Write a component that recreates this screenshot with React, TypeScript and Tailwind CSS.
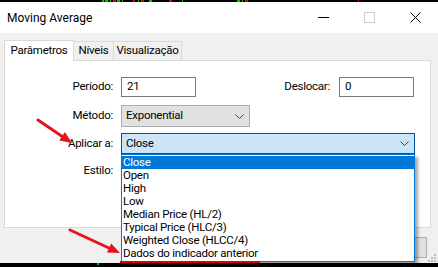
import React from "react";

const Chevron = ({ className = "" }: { className?: string }) => (
  <svg width="9" height="5" viewBox="0 0 9 5" className={className}>
    <path d="M0.5 0.5 L4.5 4.5 L8.5 0.5" fill="none" stroke="#444" strokeWidth="1" />
  </svg>
);

const marks = [
  { x: 102, w: 2, c: "#00c000" },
  { x: 105, w: 3, c: "#00c000" },
  { x: 110, w: 1, c: "#00c000" },
  { x: 113, w: 3, c: "#e00000" },
  { x: 117, w: 3, c: "#00c000" },
  { x: 122, w: 1, c: "#00c000" },
  { x: 133, w: 2, c: "#e00000" },
  { x: 138, w: 1, c: "#00c000" },
  { x: 141, w: 3, c: "#e00000" },
  { x: 149, w: 3, c: "#00c000" },
  { x: 169, w: 3, c: "#e00000" },
  { x: 182, w: 1, c: "#00c000" },
  { x: 237, w: 3, c: "#00c000" },
  { x: 242, w: 1, c: "#00c000" },
  { x: 245, w: 3, c: "#e00000" },
  { x: 358, w: 1, c: "#e00000" },
];

const items = [
  "Close",
  "Open",
  "High",
  "Low",
  "Median Price (HL/2)",
  "Typical Price (HLC/3)",
  "Weighted Close (HLCC/4)",
  "Dados do indicador anterior",
];

export default function App() {
  return (
    <div className="relative w-[438px] h-[267px] overflow-hidden bg-[#f0f0f0] flex flex-col font-['Roboto',sans-serif] text-[11.5px] tracking-[-0.25px] text-black leading-none">
      {/* top black strip */}
      <div className="relative h-[2px] bg-black shrink-0">
        {marks.map((m, i) => (
          <span
            key={i}
            className="absolute top-0 h-[2px]"
            style={{ left: m.x, width: m.w, background: m.c }}
          />
        ))}
      </div>

      {/* title bar */}
      <div className="h-[31px] bg-white flex items-center shrink-0">
        <span className="pl-[7px] text-[12px] tracking-normal">Moving Average</span>
        <div className="ml-auto flex items-center h-full">
          <div className="w-[46px] flex justify-center">
            <svg width="11" height="11" viewBox="0 0 11 11">
              <line x1="0" y1="5.5" x2="11" y2="5.5" stroke="#000" strokeWidth="1" />
            </svg>
          </div>
          <div className="w-[46px] flex justify-center">
            <svg width="11" height="11" viewBox="0 0 11 11">
              <rect x="0.5" y="0.5" width="10" height="10" fill="none" stroke="#cccccc" strokeWidth="1" />
            </svg>
          </div>
          <div className="w-[46px] flex justify-center">
            <svg width="11" height="11" viewBox="0 0 11 11">
              <path d="M0.5 0.5 L10.5 10.5 M10.5 0.5 L0.5 10.5" stroke="#000" strokeWidth="1" fill="none" />
            </svg>
          </div>
        </div>
      </div>

      {/* body */}
      <div className="flex-1 flex flex-col pt-[7px] pl-[4px]">
        {/* tabs */}
        <div className="flex items-end h-[20px] relative z-10">
          <div className="h-[21px] w-[70px] mb-[-1px] bg-white border border-b-0 border-[#d9d9d9] flex items-center justify-center pb-[1px]">
            Parâmetros
          </div>
          <div className="h-[19px] w-[40px] border border-l-0 border-b-0 border-[#d9d9d9] flex items-center justify-center bg-[#f0f0f0]">
            Níveis
          </div>
          <div className="h-[19px] w-[68px] border border-l-0 border-b-0 border-[#d9d9d9] flex items-center justify-center bg-[#f0f0f0]">
            Visualização
          </div>
        </div>

        {/* panel */}
        <div className="w-[427px] h-[168px] bg-white border border-[#d9d9d9] flex flex-col pt-[16px]">
          {/* row 1 */}
          <div className="flex items-center h-[20px]">
            <div className="w-[108px] text-right">Período:</div>
            <div className="ml-[8px] w-[75px] h-[20px] border border-[#7a7a7a] flex items-center pl-[5px]">21</div>
            <div className="ml-auto">Deslocar:</div>
            <div className="ml-[9px] mr-[16px] w-[75px] h-[20px] border border-[#7a7a7a] flex items-center pl-[5px]">0</div>
          </div>
          {/* row 2 */}
          <div className="flex items-center h-[22px] mt-[8px]">
            <div className="w-[108px] text-right">Método:</div>
            <div className="ml-[8px] w-[129px] h-[22px] border border-[#adadad] bg-[#e1e1e1] flex items-center pl-[4px] pr-[5px]">
              <span>Exponential</span>
              <Chevron className="ml-auto" />
            </div>
          </div>
          {/* row 3 */}
          <div className="flex items-center h-[21px] mt-[6px]">
            <div className="w-[108px] text-right">Aplicar a:</div>
            <div className="relative ml-[8px] w-[294px] h-[21px] border border-[#005499] bg-[#cce4f7] flex items-center pl-[4px] pr-[5px]">
              <span>Close</span>
              <Chevron className="ml-auto" />
              {/* dropdown list */}
              <div className="absolute left-[-1px] top-[20px] w-[294px] bg-white border border-[#0078d7] pt-[1px] pb-[1px] z-20 shadow-[3px_3px_3px_rgba(0,0,0,0.35)]">
                {items.map((it, i) => (
                  <div
                    key={it}
                    className={
                      i === 0
                        ? "h-[13px] flex items-center pl-[1px] bg-[#0078d7] text-white"
                        : "h-[13px] flex items-center pl-[1px]"
                    }
                  >
                    {i === items.length - 1 ? (
                      <span className="relative">
                        {it}
                        <span className="absolute left-[-3px] right-[-2px] bottom-[-4px] h-[2px] bg-[#e00000]" />
                      </span>
                    ) : (
                      it
                    )}
                  </div>
                ))}
              </div>
            </div>
          </div>
          {/* row 4 */}
          <div className="flex items-center h-[21px] mt-[6px]">
            <div className="w-[108px] text-right">Estilo:</div>
            <div className="ml-[8px] w-[129px] h-[21px] border border-[#adadad] bg-[#e1e1e1]" />
          </div>
        </div>

        {/* buttons */}
        <div className="flex justify-end pr-[11px] mt-[9px]">
          <div className="w-[75px] h-[21px] border border-[#adadad] bg-[#e1e1e1]" />
        </div>
      </div>

      {/* bottom black strip */}
      <div className="relative h-[4px] bg-black shrink-0">
        <span className="absolute left-[97px] top-0 w-[2px] h-[2px] bg-[#00c000]" />
      </div>

      {/* resize grip */}
      <svg className="absolute left-[428px] top-[254px]" width="9" height="9" viewBox="0 0 9 9">
        <rect x="6" y="0" width="2" height="2" fill="#bcbcbc" />
        <rect x="3" y="3" width="2" height="2" fill="#bcbcbc" />
        <rect x="6" y="3" width="2" height="2" fill="#bcbcbc" />
        <rect x="0" y="6" width="2" height="2" fill="#bcbcbc" />
        <rect x="3" y="6" width="2" height="2" fill="#bcbcbc" />
        <rect x="6" y="6" width="2" height="2" fill="#bcbcbc" />
      </svg>

      {/* annotation arrows */}
      <svg className="absolute left-0 top-0 pointer-events-none z-30" width="438" height="267" viewBox="0 0 438 267">
        <line x1="38" y1="120" x2="63" y2="137" stroke="#e8141c" strokeWidth="3" strokeLinecap="round" />
        <polygon points="72,143 59.3,140.4 64.9,132.1" fill="#e8141c" />
        <line x1="70" y1="230" x2="110" y2="248.5" stroke="#e8141c" strokeWidth="3" strokeLinecap="round" />
        <polygon points="120,253 107,252.5 111.2,243.5" fill="#e8141c" />
      </svg>
    </div>
  );
}
